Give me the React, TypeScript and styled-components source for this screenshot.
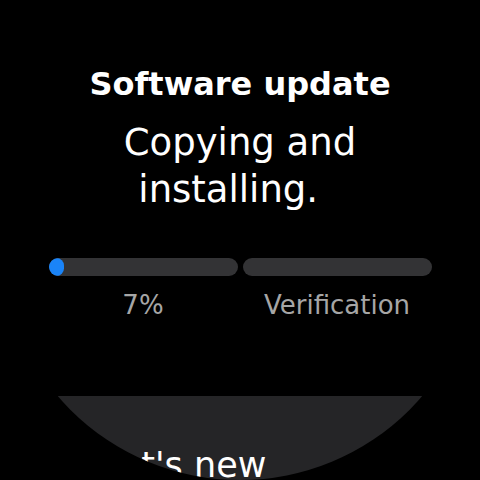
import React from "react";
import styled, { createGlobalStyle } from "styled-components";

const Global = createGlobalStyle`
  html, body { margin: 0; padding: 0; background: #000; }
  body { font-family: "DejaVu Sans", "Noto Sans", sans-serif; }
`;

const Screen = styled.div`
  width: 480px;
  height: 480px;
  background: #000;
  clip-path: circle(240px at 240px 240px);
  overflow: hidden;
  display: flex;
  flex-direction: column;
  align-items: center;
  padding-top: 64px;
  box-sizing: border-box;
  color: #fff;
`;

const Title = styled.h1`
  margin: 0;
  font-size: 32px;
  line-height: 40px;
  font-weight: 700;
  color: #fff;
  text-align: center;
`;

const Status = styled.p`
  margin: 15px 0 0;
  font-size: 37px;
  line-height: 47px;
  font-weight: 400;
  color: #fff;
  text-align: center;
  width: 320px;
`;

const Ghost = styled.span`
  visibility: hidden;
`;

const Progress = styled.div`
  margin-top: 45px;
  display: grid;
  grid-template-columns: 189px 189px;
  column-gap: 5px;
  row-gap: 13px;
`;

const Track = styled.div`
  position: relative;
  height: 18px;
  border-radius: 9px;
  background: #333335;
  overflow: hidden;
`;

const Fill = styled.div`
  height: 100%;
  border-radius: 9px;
  background: #1a84f8;
`;

const Label = styled.div`
  text-align: center;
  font-size: 26px;
  line-height: 32px;
  color: #a6a6a6;
`;

const Card = styled.section`
  margin-top: auto;
  width: 100%;
  height: 84px;
  background: #252527;
  padding: 45px 0 0 63px;
  box-sizing: border-box;
`;

const CardTitle = styled.h2`
  margin: 0;
  font-size: 35px;
  line-height: 48px;
  font-weight: 400;
  color: #fff;
  white-space: nowrap;
`;

export default function App() {
  const pct = 7;
  return (
    <>
      <Global />
      <Screen>
        <Title>Software update</Title>
        <Status>
          Copying and installing.<Ghost>..</Ghost>
        </Status>
        <Progress>
          <Track>
            <Fill style={{ width: `${(pct / 100) * 189 + 2}px` }} />
          </Track>
          <Track />
          <Label>{pct}%</Label>
          <Label>Verification</Label>
        </Progress>
        <Card>
          <CardTitle>What's new</CardTitle>
        </Card>
      </Screen>
    </>
  );
}
